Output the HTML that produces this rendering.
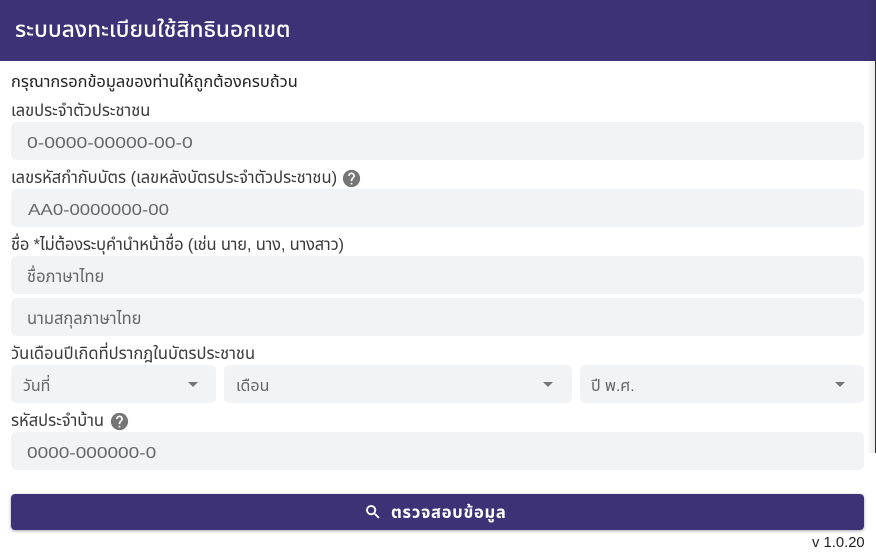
<!DOCTYPE html>
<html lang="th"><head><meta charset="utf-8">
<style>
*{box-sizing:border-box;margin:0;padding:0}
html,body{width:876px;height:554px;overflow:hidden;background:#fff;font-family:"Liberation Sans","Noto Sans Thai","Noto Sans CJK SC",sans-serif}
.a{position:absolute;white-space:nowrap}
.hd{left:0;top:0;width:876px;height:61px;background:#3d3276}
.t{left:15px;top:15px;font-size:22.6px;line-height:30px;color:#fff;font-weight:500}
.l{left:11px;font-size:16.5px;line-height:20px;color:#3a3a3a}
.f{background:#f2f3f5;border-radius:5px;height:38px}
.p{font-size:16.5px;line-height:22px;color:#666}
.d{transform-origin:0 50%}
.c{width:0;height:0;border-left:5px solid transparent;border-right:5px solid transparent;border-top:5px solid #757575}
.b{left:11px;top:494px;width:853px;height:36px;background:#3d3276;border-radius:4px;box-shadow:0 1px 3px rgba(0,0,0,.35)}
</style></head><body>
<div class="a hd"></div>
<div class="a" style="left:870px;top:0;width:6px;height:61px;background:linear-gradient(90deg,rgba(0,0,0,0),rgba(0,0,0,.12))"></div>
<div class="a" style="left:866px;top:61px;width:9px;height:392px;background:linear-gradient(90deg,rgba(0,0,0,0),rgba(0,0,0,.08))"></div>
<div class="a" style="left:875px;top:61px;width:1px;height:392px;background:#333"></div>
<div class="a t">ระบบลงทะเบียนใช้สิทธินอกเขต</div>
<div class="a l" style="top:72px;color:#222;font-size:16.4px">กรุณากรอกข้อมูลของท่านให้ถูกต้องครบถ้วน</div>
<div class="a l" style="top:101px">เลขประจำตัวประชาชน</div>
<div class="a f" style="left:11px;top:122px;width:853px"></div>
<div class="a p d" style="left:27px;top:133px;font-size:16px;transform:scaleX(1.21)">0-0000-00000-00-0</div>
<div class="a l" style="top:168px;letter-spacing:-.02px">เลขรหัสกำกับบัตร (เลขหลังบัตรประจำตัวประชาชน)</div>
<svg class="a" style="left:342px;top:169px" width="19" height="19" viewBox="1 1 22 22"><path fill="#757575" d="M12 2a10 10 0 1 0 0 20 10 10 0 0 0 0-20zm1 17h-2v-2h2v2zm2.07-7.75-.9.92C13.45 12.900 13 13.500 13 15h-2v-.5c0-1.100.45-2.100 1.170-2.830l1.240-1.260c.37-.36.59-.86.59-1.410 0-1.100-.9-2-2-2s-2 .9-2 2H8c0-2.210 1.790-4 4-4s4 1.790 4 4c0 .88-.36 1.680-.93 2.250z"/></svg>
<div class="a f" style="left:11px;top:189px;width:853px"></div>
<div class="a p d" style="left:28px;top:200px;font-size:16px;transform:scaleX(1.165)">AA0-0000000-00</div>
<div class="a l" style="top:235px;letter-spacing:-.18px">ชื่อ *ไม่ต้องระบุคำนำหน้าชื่อ (เช่น นาย, นาง, นางสาว)</div>
<div class="a f" style="left:11px;top:256px;width:853px"></div>
<div class="a p" style="left:27px;top:266px">ชื่อภาษาไทย</div>
<div class="a f" style="left:11px;top:298px;width:853px"></div>
<div class="a p" style="left:27px;top:308px">นามสกุลภาษาไทย</div>
<div class="a l" style="top:344px">วันเดือนปีเกิดที่ปรากฎในบัตรประชาชน</div>
<div class="a f" style="left:11px;top:365px;width:205px"></div>
<div class="a p" style="left:23px;top:376px;font-size:16px">วันที่</div>
<div class="a c" style="left:188px;top:382px"></div>
<div class="a f" style="left:224px;top:365px;width:348px"></div>
<div class="a p" style="left:236px;top:376px;font-size:16px">เดือน</div>
<div class="a c" style="left:543px;top:382px"></div>
<div class="a f" style="left:580px;top:365px;width:284px"></div>
<div class="a p" style="left:591px;top:376px;font-size:16px;letter-spacing:-.1px">ปี พ.ศ.</div>
<div class="a c" style="left:835px;top:382px"></div>
<div class="a l" style="top:411px">รหัสประจำบ้าน</div>
<svg class="a" style="left:110px;top:412px" width="19" height="19" viewBox="1 1 22 22"><path fill="#757575" d="M12 2a10 10 0 1 0 0 20 10 10 0 0 0 0-20zm1 17h-2v-2h2v2zm2.07-7.75-.9.92C13.45 12.900 13 13.500 13 15h-2v-.5c0-1.100.45-2.100 1.170-2.830l1.240-1.260c.37-.36.59-.86.59-1.410 0-1.100-.9-2-2-2s-2 .9-2 2H8c0-2.210 1.790-4 4-4s4 1.790 4 4c0 .88-.36 1.680-.93 2.250z"/></svg>
<div class="a f" style="left:11px;top:432px;width:853px"></div>
<div class="a p d" style="left:27px;top:443px;font-size:16px;transform:scaleX(1.19)">0000-000000-0</div>
<div class="a b"></div>
<svg class="a" style="left:364px;top:503px" width="18" height="18" viewBox="0 0 24 24"><path fill="#fff" stroke="#fff" stroke-width=".6" d="M15.500 14h-.79l-.28-.27A6.470 6.470 0 0 0 16 9.500 6.500 6.500 0 1 0 9.500 16c1.610 0 3.090-.59 4.230-1.570l.27.28v.79l5 4.990L20.490 19l-4.990-5zm-6 0C7.010 14 5 11.990 5 9.500S7.010 5 9.500 5 14 7.010 14 9.500 11.990 14 9.500 14z"/></svg>
<div class="a" style="left:391px;top:503px;font-size:16.5px;line-height:20px;color:#fff;font-weight:700;letter-spacing:.75px">ตรวจสอบข้อมูล</div>
<div class="a" style="left:812px;top:534px;font-size:14.8px;line-height:18px;color:#222">v 1.0.20</div>
</body></html>
